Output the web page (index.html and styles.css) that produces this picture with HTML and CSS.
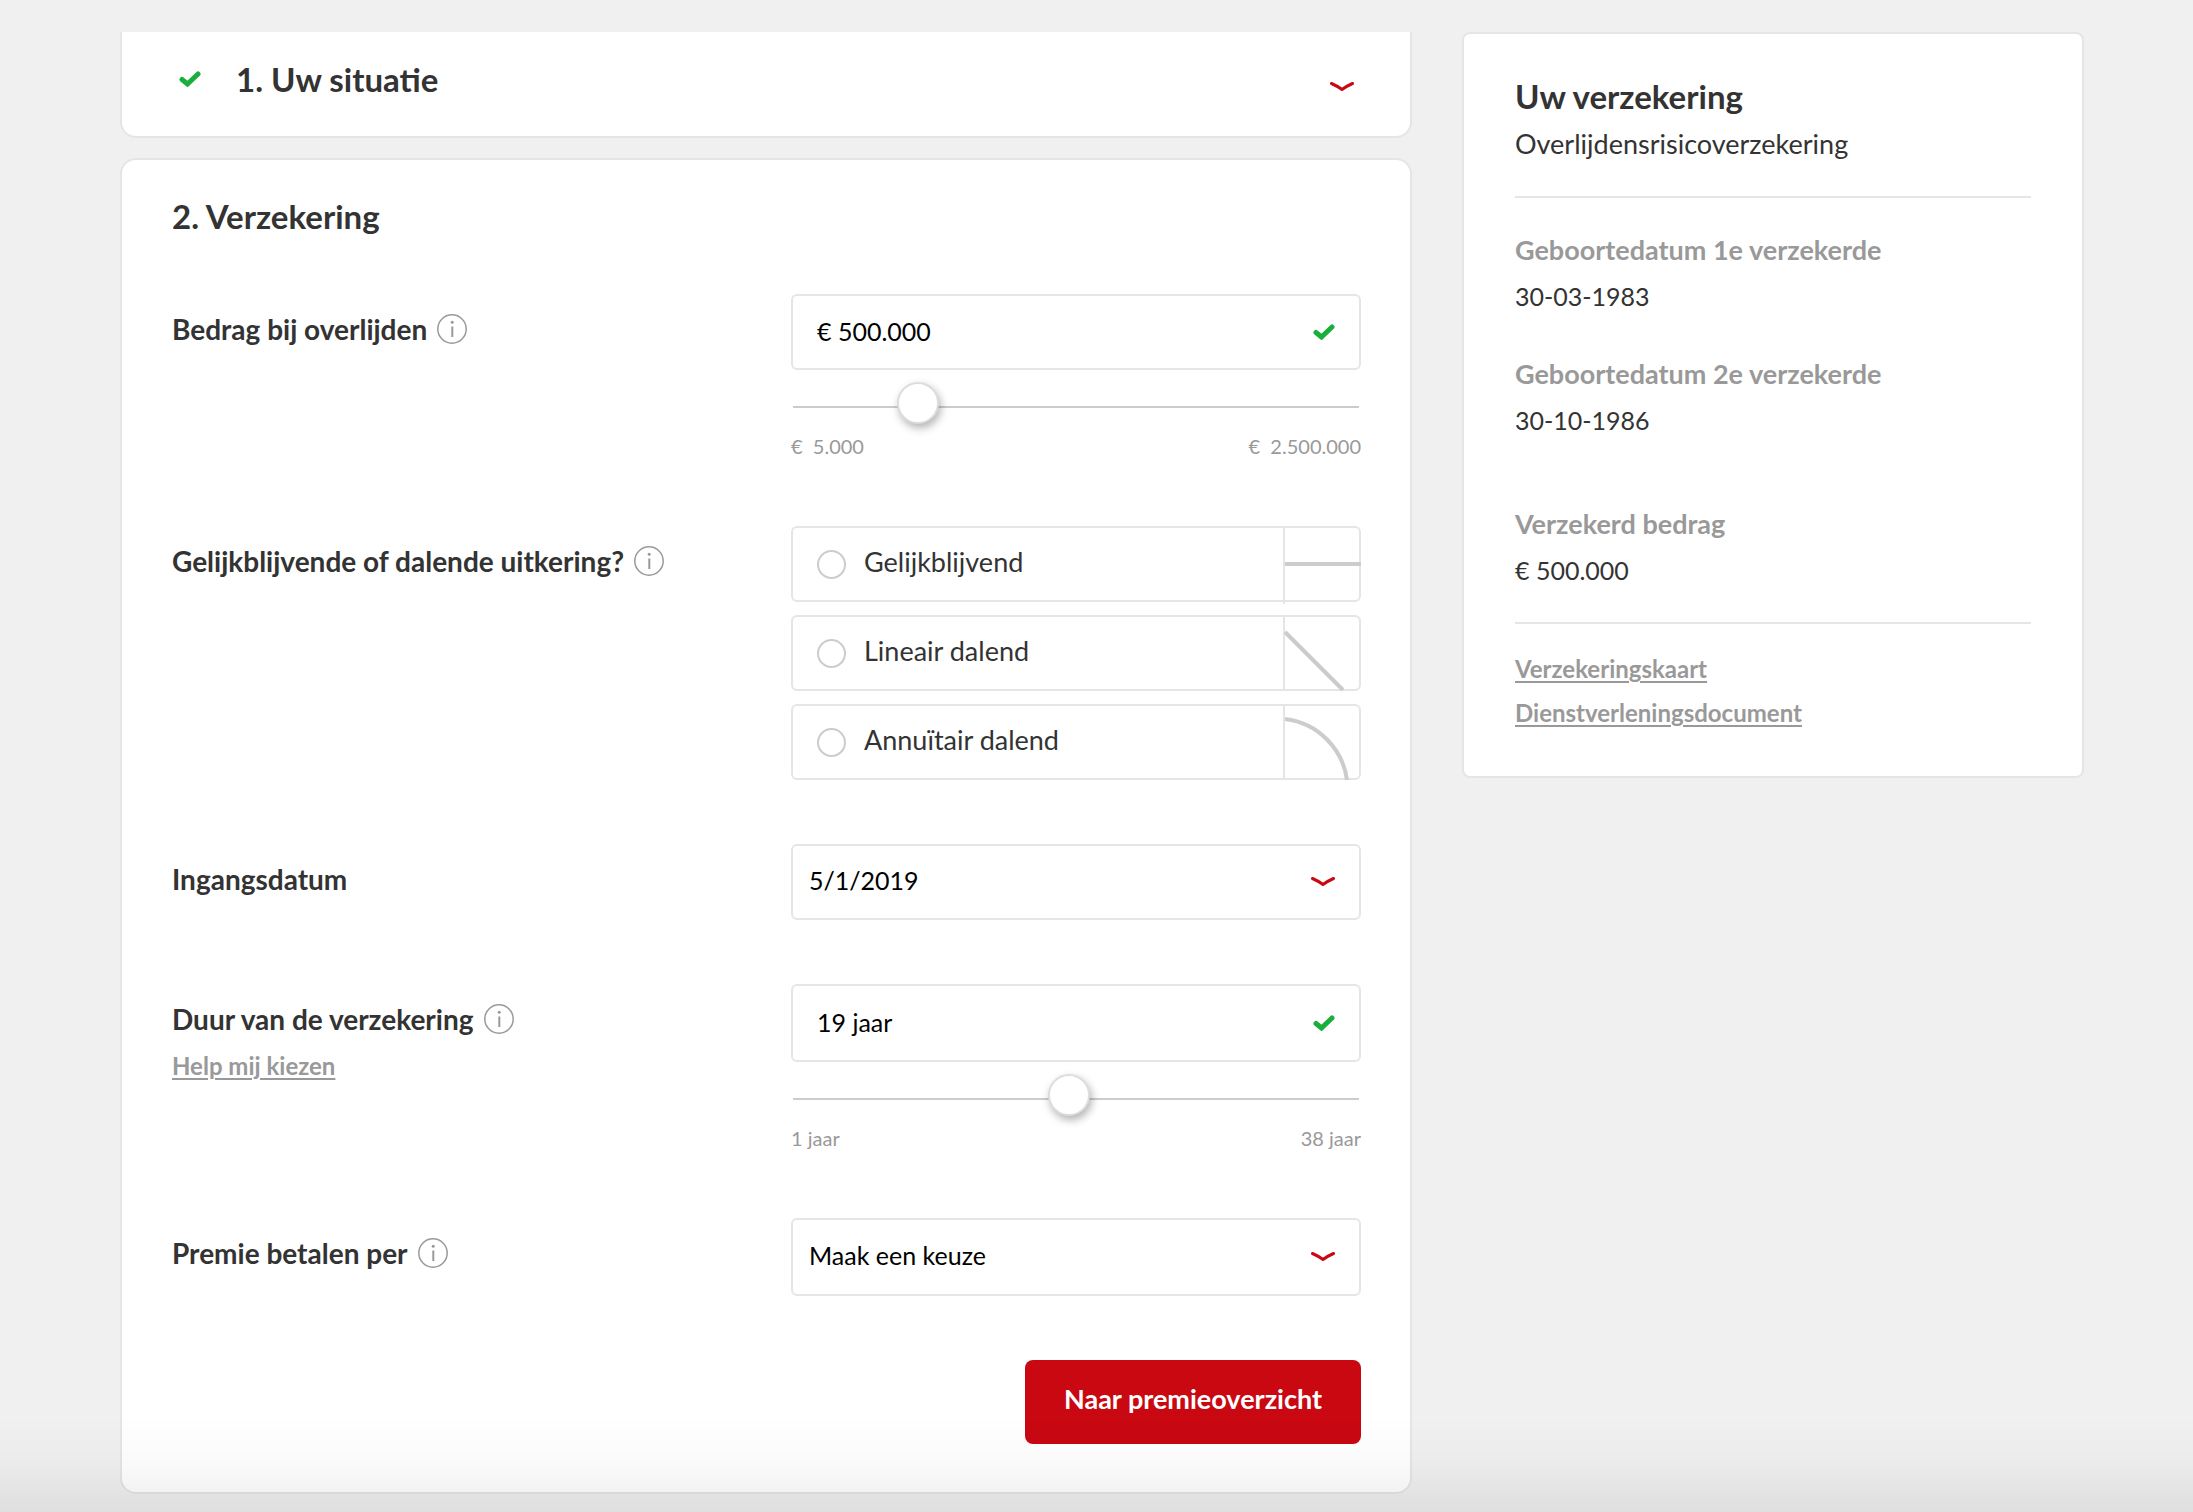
FILE: index.html
```html
<!DOCTYPE html>
<html lang="nl">
<head>
<meta charset="utf-8">
<meta name="viewport" content="width=device-width, initial-scale=1">
<title>Overlijdensrisicoverzekering</title>
<link rel="stylesheet" href="styles.css">
</head>
<body>
<svg class="sprite" aria-hidden="true">
  <symbol id="check" viewBox="0 0 22 16"><path d="M3 8.5 8.500 13 19 3" fill="none" stroke="currentColor" stroke-width="5" stroke-linecap="round"/></symbol>
  <symbol id="chevron" viewBox="0 0 24 10"><path d="M1.500 1.500C5 3 8.500 5 12 7.500 15.500 5 19 3 22.500 1.500" fill="none" stroke="currentColor" stroke-width="3" stroke-linecap="round" stroke-linejoin="round"/></symbol>
  <symbol id="info" viewBox="0 0 30 30"><circle cx="15" cy="15" r="14.200" fill="none" stroke="currentColor" stroke-width="1.500"/><circle cx="15.200" cy="8.200" r="1.500" fill="currentColor"/><path d="M15.300 12.500V23" stroke="currentColor" stroke-width="2"/></symbol>
</svg>
<div class="page">
  <main class="steps">
    <section class="card card-closed">
      <button class="step-toggle" type="button" aria-expanded="false">
        <svg class="icon-check"><use href="#check"/></svg>
        <span class="title">1. Uw situatie</span>
        <svg class="icon-chevron"><use href="#chevron"/></svg>
      </button>
    </section>

    <form class="card card-open">
      <h2 class="title">2. Verzekering</h2>

      <div class="row">
        <div class="row-label">
          <div class="label-line">
            <label for="bedrag">Bedrag bij overlijden</label>
            <button class="info" type="button" aria-label="Uitleg bedrag"><svg><use href="#info"/></svg></button>
          </div>
        </div>
        <div class="row-field">
          <div class="control">
            <input class="box box-text" id="bedrag" type="text" value="€ 500.000">
            <svg class="icon-check"><use href="#check"/></svg>
          </div>
          <input class="slider" type="range" aria-label="Bedrag" min="5000" max="2500000" step="5000" value="500000">
          <div class="scale"><span>€&nbsp; 5.000</span><span>€&nbsp; 2.500.000</span></div>
        </div>
      </div>

      <div class="row" role="radiogroup" aria-labelledby="uitkering">
        <div class="row-label">
          <div class="label-line">
            <span id="uitkering">Gelijkblijvende of dalende uitkering?</span>
            <button class="info" type="button" aria-label="Uitleg uitkering"><svg><use href="#info"/></svg></button>
          </div>
        </div>
        <div class="row-field options">
          <label class="box option">
            <input class="radio" type="radio" name="uitkering">
            <span class="option-text">Gelijkblijvend</span>
            <svg class="chart" viewBox="0 0 78 78"><path class="divider" d="M1 2V78"/><path d="M2 38H78"/></svg>
          </label>
          <label class="box option">
            <input class="radio" type="radio" name="uitkering">
            <span class="option-text">Lineair dalend</span>
            <svg class="chart" viewBox="0 0 78 78"><path class="divider" d="M1 2V74"/><path d="M2 17 60 75"/></svg>
          </label>
          <label class="box option">
            <input class="radio" type="radio" name="uitkering">
            <span class="option-text">Annuïtair dalend</span>
            <svg class="chart" viewBox="0 0 78 78"><path class="divider" d="M1 2V74"/><path d="M2 15C36 19 60 46 64 76"/></svg>
          </label>
        </div>
      </div>

      <div class="row">
        <div class="row-label">
          <div class="label-line"><label for="ingang">Ingangsdatum</label></div>
        </div>
        <div class="row-field">
          <div class="control">
            <select class="box box-select" id="ingang"><option>5/1/2019</option></select>
            <svg class="icon-chevron"><use href="#chevron"/></svg>
          </div>
        </div>
      </div>

      <div class="row">
        <div class="row-label">
          <div class="label-line">
            <label for="duur">Duur van de verzekering</label>
            <button class="info" type="button" aria-label="Uitleg duur"><svg><use href="#info"/></svg></button>
          </div>
          <a class="link help" href="#help">Help mij kiezen</a>
        </div>
        <div class="row-field">
          <div class="control">
            <input class="box box-tall box-text" id="duur" type="text" value="19 jaar">
            <svg class="icon-check"><use href="#check"/></svg>
          </div>
          <input class="slider" type="range" aria-label="Duur" min="1" max="38" value="19">
          <div class="scale"><span>1 jaar</span><span>38 jaar</span></div>
        </div>
      </div>

      <div class="row">
        <div class="row-label">
          <div class="label-line">
            <label for="premie">Premie betalen per</label>
            <button class="info" type="button" aria-label="Uitleg premie"><svg><use href="#info"/></svg></button>
          </div>
        </div>
        <div class="row-field">
          <div class="control">
            <select class="box box-tall box-select" id="premie"><option>Maak een keuze</option></select>
            <svg class="icon-chevron"><use href="#chevron"/></svg>
          </div>
        </div>
      </div>

      <div class="actions"><button class="submit" type="submit">Naar premieoverzicht</button></div>
    </form>
  </main>

  <aside class="summary">
    <h2 class="title">Uw verzekering</h2>
    <p class="product">Overlijdensrisicoverzekering</p>
    <dl class="facts">
      <div><dt>Geboortedatum 1e verzekerde</dt><dd>30-03-1983</dd></div>
      <div><dt>Geboortedatum 2e verzekerde</dt><dd>30-10-1986</dd></div>
      <div class="amount"><dt>Verzekerd bedrag</dt><dd>€ 500.000</dd></div>
    </dl>
    <nav class="documents">
      <a class="link" href="#kaart">Verzekeringskaart</a>
      <a class="link" href="#document">Dienstverleningsdocument</a>
    </nav>
  </aside>
</div>
<div class="fade"></div>
</body>
</html>
```
FILE: styles.css
```css
* { box-sizing: border-box; }

body {
  margin: 0;
  background: #f0f0f0;
  color: #333;
  font: 25px/30px Lato, sans-serif;
}

button, input, select { font: inherit; color: inherit; margin: 0; }
svg { display: block; }
.sprite { position: absolute; width: 0; height: 0; }

.page {
  display: grid;
  grid-template-columns: 1292fr 622fr;
  gap: 50px;
  align-items: start;
  padding: 32px 109px 18px 120px;
}

.steps { display: grid; gap: 20px; }

.card { background: #fff; border: 2px solid #e5e5e5; border-radius: 16px; }
.card-closed { border-top: 0; border-radius: 0 0 16px 16px; }
.card-open { padding: 36px 49px 48px 50px; }

.title { margin: 0; font-size: 33px; line-height: 40px; font-weight: 700; }

.step-toggle {
  display: flex;
  align-items: center;
  width: 100%;
  padding: 27px 56px 37px 57px;
  border: 0;
  background: none;
  text-align: left;
}
.step-toggle .title { flex: 1; margin-left: 35px; }
.step-toggle .icon-chevron { margin-top: 16px; }

.icon-check { width: 22px; height: 16px; color: #1aaf3c; }
.icon-chevron { width: 24px; height: 10px; color: #c90812; }

.row { display: grid; grid-template-columns: 619fr 570fr; margin-top: 64px; }
.title + .row { margin-top: 58px; }
.row-label { padding-top: 20px; font-size: 28px; font-weight: 700; }
.label-line { display: flex; align-items: center; gap: 10px; }

.info { padding: 0; border: 0; background: none; color: #999; }
.info svg { width: 30px; height: 30px; }

.link { color: #999; font-size: 24px; font-weight: 700; text-underline-offset: 3px; text-decoration-thickness: 2px; }
.help { display: block; width: fit-content; margin-top: 18px; line-height: 28px; }

.box {
  display: block;
  width: 100%;
  height: 76px;
  background: #fff;
  border: 2px solid #e5e5e5;
  border-radius: 6px;
}
.box-tall { height: 78px; }
.control { position: relative; }
.control .icon-check, .control .icon-chevron { position: absolute; right: 26px; top: 50%; transform: translateY(-50%); pointer-events: none; }
.box-text { padding: 0 70px 2px 24px; color: #000; }
.box-select { appearance: none; padding: 0 70px 4px 16px; color: #000; }

.slider {
  appearance: none;
  display: block;
  width: calc(100% - 4px);
  height: 46px;
  margin: 14px 2px 0;
  background: none;
}
.slider::-webkit-slider-runnable-track { height: 2px; background: #ccc; }
.slider::-webkit-slider-thumb {
  appearance: none;
  width: 42px;
  height: 42px;
  margin-top: -24px;
  background: #fff;
  border: 2px solid #ddd;
  border-radius: 50%;
  box-shadow: 2px 4px 8px rgba(0, 0, 0, .3);
}
.scale { display: flex; justify-content: space-between; color: #999; font-size: 20px; line-height: 32px; }

.options { display: grid; gap: 13px; }
.option { position: relative; display: flex; align-items: center; gap: 18px; padding: 0 90px 0 24px; }
.option-text { padding-bottom: 4px; font-size: 27px; }
.radio {
  appearance: none;
  width: 29px;
  height: 29px;
  border: 2px solid #ccc;
  border-radius: 50%;
}
.chart { position: absolute; top: -2px; right: -2px; width: 78px; height: 78px; fill: none; stroke: #ccc; stroke-width: 4px; }
.chart .divider { stroke: #e5e5e5; stroke-width: 2px; }

.actions { display: flex; justify-content: flex-end; margin-top: 64px; }
.submit {
  padding: 24px 39px 30px;
  background: #c90812;
  color: #fff;
  border: 0;
  border-radius: 8px;
  font-size: 27px;
  font-weight: 700;
}

.summary { padding: 42px 51px 41px; background: #fff; border: 2px solid #e5e5e5; border-radius: 8px; }
.product { margin: 13px 0 37px; font-size: 27px; }
.facts { display: grid; gap: 48px; margin: 0; padding: 37px 0; border: solid #e5e5e5; border-width: 2px 0; }
.facts dt { color: #999; font-size: 27px; font-weight: 700; }
.facts dd { margin: 16px 0 0; }
.amount { margin-top: 26px; }
.documents { display: grid; justify-items: start; margin-top: 23px; line-height: 44px; }

/* Soft shade along the bottom of the window */
.fade {
  position: fixed;
  inset: auto 0 0;
  height: 96px;
  background: linear-gradient(rgba(0, 0, 0, 0), rgba(0, 0, 0, .02) 50%, rgba(0, 0, 0, .07));
  pointer-events: none;
}
```
